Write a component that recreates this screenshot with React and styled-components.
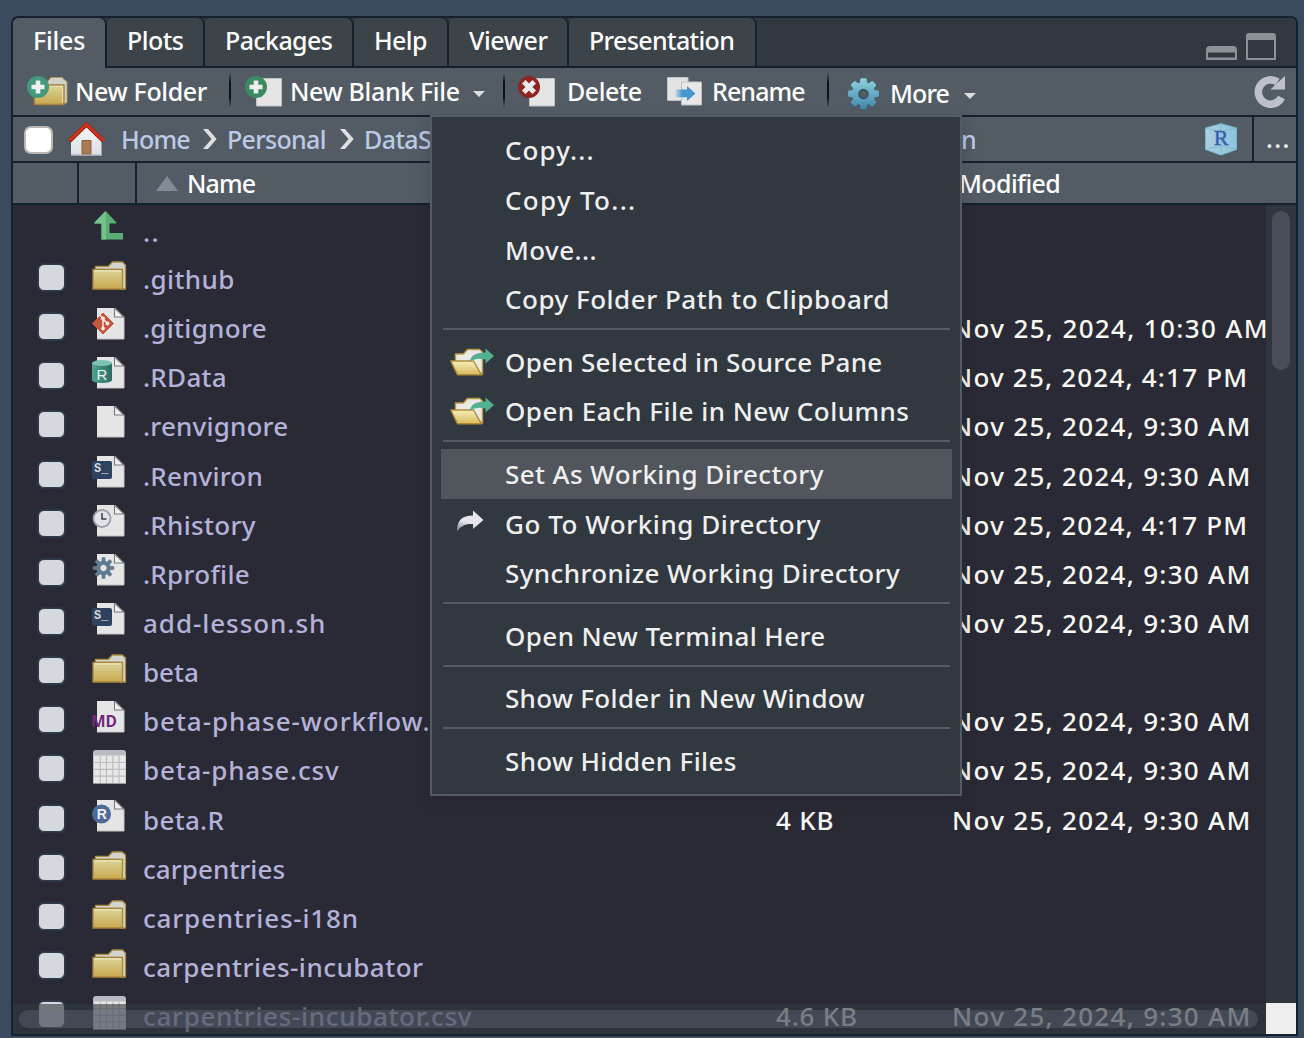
import React from "react";
import styled, { createGlobalStyle, css } from "styled-components";

const line = "#15212f";
const bar = "#535c65";
const dark = "#31383f";

const GlobalStyle = createGlobalStyle`
  * { box-sizing: border-box; }
  html, body { margin: 0; height: 100%; overflow: hidden; }
  body {
    background: #3a4b60;
    font-family: "Noto Sans", "Open Sans", sans-serif;
    font-size: 26px;
    font-weight: 500;
    color: #fff;
  }
  svg { display: block; flex: none; }
`;

const Desktop = styled.div`
  height: 1038px;
  padding: 16px 5px 2px 11px;
`;

const Pane = styled.section`
  position: relative;
  width: 1287px;
  height: 1020px;
  border: 2px solid ${line};
  border-radius: 7px 7px 0 0;
  display: flex;
  flex-direction: column;
  background: ${dark};
`;

const TabStrip = styled.div`
  display: flex;
  height: 50px;
  flex: none;
  font-size: 25px;
  background: linear-gradient(${line}, ${line}) 0 100% / 100% 2px no-repeat, ${dark};
  border-radius: 5px 5px 0 0;
`;

const Tab = styled.div`
  width: ${(p) => p.$w}px;
  height: ${(p) => (p.$active ? 50 : 48)}px;
  padding: 4px 0 0 20px;
  line-height: 36px;
  background: ${(p) => (p.$active ? bar : "#3c4349")};
  border-radius: 6px 6px 0 0;
  box-shadow: 2px 0 0 ${line};
  margin-right: 2px;
`;

const WindowButtons = styled.div`
  margin-left: auto;
  display: flex;
  gap: 9px;
  align-items: flex-end;
  padding: 0 20px 8px 0;
`;

const Toolbar = styled.div`
  display: flex;
  align-items: center;
  height: 49px;
  flex: none;
  padding: 0 10px 0 14px;
  font-size: 25px;
  background: ${bar};
  border-bottom: 2px solid ${line};
`;

const Label = styled.span`
  white-space: pre;
  line-height: 36px;
  letter-spacing: ${(p) => p.$ls || 0}px;
  ${(p) => p.$w && css`flex: 0 0 ${p.$w}px; width: ${p.$w}px;`}
`;

const ToolLabel = styled(Label)`
  padding-bottom: 2px;
`;

const ToolButton = styled.div`
  display: flex;
  align-items: center;
  width: ${(p) => p.$w}px;
  flex: none;
  padding-top: ${(p) => p.$drop || 0}px;
`;

const IconSlot = styled.span`
  display: flex;
  flex: 0 0 ${(p) => p.$w}px;
`;

const Divider = styled.div`
  width: 2px;
  height: 36px;
  flex: none;
  margin-right: ${(p) => p.$after}px;
  margin-bottom: 4px;
  background: linear-gradient(#0000, #0b1118 30%, #0b1118 70%, #0000);
`;

const Caret = styled.span`
  margin-top: 5px;
  border: 6px solid transparent;
  border-top-color: #dcdee0;
  border-bottom: 0;
`;

const PathBar = styled.div`
  display: flex;
  align-items: center;
  height: 46px;
  flex: none;
  padding-left: 11px;
  font-size: 25px;
  color: #bccae6;
  background: ${bar};
  border-bottom: 2px solid ${line};
`;

const SelectAll = styled.span`
  width: 29px;
  height: 28px;
  flex: none;
  background: #fff;
  border: 2px solid #b9b6b3;
  border-radius: 7px;
  margin: 2px 15px 0 0;
`;

const HomeSlot = styled.span`
  flex: 0 0 53px;
`;

const PathEnd = styled.div`
  display: flex;
  margin-left: auto;
  align-items: center;
  height: 44px;
`;

const Browse = styled.div`
  width: 44px;
  height: 44px;
  margin-left: 14px;
  padding: 3px 0 0 12px;
  line-height: 36px;
  letter-spacing: 1.4px;
  color: #fff;
  border-left: 2px solid ${line};
`;

const HeaderRow = styled.div`
  display: grid;
  grid-template-columns: 66px 58px 822px 1fr;
  height: 42px;
  flex: none;
  font-size: 25px;
  background: ${bar};
  border-bottom: 2px solid ${line};
`;

const HeaderCell = styled.div`
  display: flex;
  align-items: center;
  gap: 9px;
  padding-left: ${(p) => p.$pad || 0}px;
  border-right: ${(p) => (p.$rule ? 2 : 0)}px solid ${line};
`;

const Body = styled.div`
  flex: 1;
  min-height: 0;
  display: grid;
  grid-template-columns: 1fr 30px;
`;

const FileList = styled.div`
  position: relative;
  overflow: hidden;
  background: #292a35;
`;

const FileRow = styled.div`
  display: grid;
  grid-template-columns: 25px 79px 633px 176px 1fr;
  padding-left: 26px;
  height: ${(p) => (p.$first ? 48 : 49.15)}px;
  color: #f8f8f2;
`;

const CheckCell = styled.div`
  padding-top: 11px;
`;

const Check = styled.span`
  display: block;
  width: 27px;
  height: 27px;
  margin-left: -1px;
  background: #d5d9dd;
  border: 1px solid #2d3c4b;
  border-radius: 6px;
  box-shadow: 0 0 0 1px #2b3543;
`;

const IconCell = styled.div`
  padding: ${(p) => (p.$first ? 3 : 6)}px 0 0 28px;
`;

const FileText = styled(Label)`
  padding-top: ${(p) => (p.$first ? 8 : 7)}px;
  line-height: 38px;
  color: ${(p) => (p.$name ? "#b5b1d8" : "inherit")};
`;

const BottomScroll = styled.div`
  position: absolute;
  left: 0;
  right: 0;
  bottom: 0;
  height: 30px;
  padding: 6px 8px 6px 6px;
  background: rgba(49, 57, 62, 0.62);
`;

const SideScroll = styled.div`
  display: flex;
  flex-direction: column;
  align-items: center;
  padding-top: 6px;
  background: #2f363d;
`;

const Thumb = styled.div`
  border-radius: 9px;
  width: ${(p) => (p.$side ? "18px" : "100%")};
  height: ${(p) => (p.$side ? 159 : 18)}px;
  background: ${(p) => (p.$side ? "#484d59" : "rgba(112, 118, 140, 0.32)")};
`;

const Corner = styled.div`
  width: 30px;
  height: 31px;
  margin-top: auto;
  background: #eee;
`;

const Menu = styled.div`
  position: absolute;
  left: 417px;
  top: 97px;
  width: 532px;
  height: 681px;
  padding: 8.6px 8px 0 9px;
  background: ${dark};
  border: 2px solid ${bar};
  color: #efefef;
  box-shadow: 0 5px 14px rgba(40, 34, 44, 0.3);
`;

const MenuItem = styled.div`
  display: flex;
  align-items: center;
  height: 49.6px;
  background: ${(p) => (p.$hot ? "#50565b" : "none")};
`;

const MenuIcon = styled.span`
  flex: 0 0 64px;
  padding-left: 9px;
`;

const MenuRule = styled.div`
  height: 2px;
  margin: 4px 2px 7px;
  background: ${bar};
`;

/* ---------- icons ---------- */

const gearPath = (cx, cy, inner, outer, teeth, half) => {
  const pts = [];
  for (let i = 0; i < teeth; i++) {
    const a = (i / teeth) * Math.PI * 2;
    [[inner, -half * 1.7], [outer, -half], [outer, half], [inner, half * 1.7]].forEach(([r, d]) => {
      pts.push(`${(cx + r * Math.sin(a + d)).toFixed(2)} ${(cy - r * Math.cos(a + d)).toFixed(2)}`);
    });
  }
  return `M${pts.join("L")}Z`;
};

const FolderGradient = ({ id }) => (
  <linearGradient id={id} x1="0" y1="0" x2="0" y2="1">
    <stop offset="0" stopColor="#dcd59c" />
    <stop offset="1" stopColor="#c9a84e" />
  </linearGradient>
);

const PlusBadge = ({ color }) => (
  <>
    <circle cx="11" cy="11" r="11" fill={color} />
    <path d="M8.700 4.500h4.600v4.200h4.200v4.600h-4.200v4.200H8.700v-4.200H4.500V8.700h4.200z" fill="#edf0ee" />
  </>
);

const NewFolderIcon = () => (
  <svg width="41" height="31" viewBox="0 0 41 31">
    <defs><FolderGradient id="nf" /></defs>
    <path d="M20 6l4-4.500h11L40 6v20.500L37 28H20z" fill="#d2d1cc" stroke="#b0975a" />
    <path d="M7.500 9H37v19.500H7.500z" fill="url(#nf)" stroke="#a5813a" strokeWidth="1.400" />
    <path d="M20 10.300h15.600V27" stroke="#e9e4b8" strokeWidth="1" fill="none" />
    <PlusBadge color="#45987b" />
  </svg>
);

const NewFileIcon = () => (
  <svg width="38" height="31" viewBox="0 0 38 31">
    <path d="M11.500 2.500h25v27.500h-25z" fill="#e5e5e5" stroke="#bfc2c4" />
    <PlusBadge color="#3b8a62" />
  </svg>
);

const DeleteIcon = () => (
  <svg width="38" height="31" viewBox="0 0 38 31">
    <path d="M11.500 2.500h25v27.500h-25z" fill="#e5e5e5" stroke="#bfc2c4" />
    <circle cx="11" cy="11" r="11" fill="#8d2521" />
    <path d="M5.800 5.800L16.200 16.200M16.200 5.800L5.800 16.200" stroke="#ececec" strokeWidth="5" />
  </svg>
);

const RenameIcon = () => (
  <svg width="36" height="29" viewBox="0 0 36 29">
    <defs>
      <linearGradient id="rn"><stop offset="0" stopColor="#4c98d0" stopOpacity="0.2" /><stop offset="0.350" stopColor="#4596cf" /></linearGradient>
    </defs>
    <path d="M.5.500h20.500v23H.500z" fill="#e3e3e3" stroke="#bfc2c4" />
    <path d="M14.500 5h20v23h-20z" fill="#e8e8e8" stroke="#bfc2c4" />
    <path d="M8.500 12.500H20V9l8.500 7.500L20 24v-3.700H8.500z" fill="url(#rn)" />
  </svg>
);

const MoreGear = () => (
  <svg width="34" height="34" viewBox="0 0 34 34">
    <defs>
      <linearGradient id="mg" x1="0" y1="0" x2="0" y2="1"><stop offset="0" stopColor="#8bcfdd" /><stop offset="1" stopColor="#4489ad" /></linearGradient>
    </defs>
    <path d={gearPath(16.5, 17, 10.8, 15, 8, 0.15)} fill="#2e4450" stroke="#3d5b6b" strokeWidth="3.400" strokeLinejoin="round" opacity=".6" />
    <path d={gearPath(16.5, 16.7, 10.8, 14.6, 8, 0.15)} fill="url(#mg)" stroke="url(#mg)" strokeWidth="2" strokeLinejoin="round" />
    <circle cx="16.500" cy="17" r="4.300" fill={bar} stroke="#3a5361" strokeWidth="2" />
  </svg>
);

const RefreshIcon = () => (
  <svg width="32" height="33" viewBox="0 0 32 33">
    <path d="M27.500 22.500A12.200 12.200 0 1 1 23.500 7" fill="none" stroke="#bfc1c9" strokeWidth="7.600" />
    <path d="M31 1v13.500H16.500l5-5z" fill="#bfc1c9" />
  </svg>
);

const MinimizeIcon = () => (
  <svg width="31" height="14" viewBox="0 0 31 14">
    <path fillRule="evenodd" d="M4 0h23q4 0 4 4v10H0V4q0-4 4-4zM2 6.500v5h27v-5z" fill="#8b9296" />
  </svg>
);

const MaximizeIcon = () => (
  <svg width="30" height="27" viewBox="0 0 30 27">
    <path fillRule="evenodd" d="M3 0h24q3 0 3 3v24H0V3q0-3 3-3zM2 7v18h26V7z" fill="#8b9296" />
  </svg>
);

const HomeIcon = () => (
  <svg width="37" height="34" viewBox="0 0 37 34">
    <defs>
      <linearGradient id="hm" x1="0" y1="0" x2="0" y2="1"><stop offset="0" stopColor="#f6f6f7" /><stop offset="1" stopColor="#dddfe5" /></linearGradient>
    </defs>
    <path d="M18.500 4L33.500 18v15H3V18z" fill="url(#hm)" />
    <path d="M3 33h31" stroke="#b8bcc2" strokeWidth="1.500" />
    <path d="M14 18.500h9V32h-9z" fill="#a97c52" stroke="#8b623e" />
    <path d="M1.500 19L18.500 2.500 35.500 19" fill="none" stroke="#8c2216" strokeWidth="4.200" />
    <path d="M1.500 18.500L18.500 2.200 35.500 18.500" fill="none" stroke="#d5321e" strokeWidth="2.600" />
  </svg>
);

const Chevron = () => (
  <svg width="15" height="22" viewBox="0 0 15 22">
    <path d="M0 1h5l8.700 10L5 21H0l8.500-10z" fill="#dfdfe0" />
  </svg>
);

const ProjectCube = () => (
  <svg width="34" height="33" viewBox="0 0 34 33">
    <defs><linearGradient id="pc"><stop offset="0" stopColor="#abcfdf" /><stop offset="1" stopColor="#8fc2df" /></linearGradient></defs>
    <path d="M17 .7L32.500 5v21.500L17 32 1.500 26.500V5z" fill="url(#pc)" stroke="#78b9cf" />
    <path d="M1.500 5L17 8.500 32.500 5M17 .7V32M1.500 26.500L17 22.500l15.500 4" fill="none" stroke="#74bccb" strokeWidth="1" opacity=".8" />
    <text x="17" y="21.500" textAnchor="middle" fontFamily="Liberation Serif, serif" fontSize="22" fill="#3b5fae" stroke="#3b5fae" strokeWidth=".5">R</text>
  </svg>
);

const UpIcon = () => (
  <svg width="36" height="34" viewBox="0 0 36 34">
    <path d="M13.500 3l11 11.500v1H17.500V25H31v6.500H9.500v-16H2.500v-1z" fill="#5aae74" />
    <path d="M13.500 3L2.500 14.500v1h7v16H14V12z" fill="#76c08a" />
  </svg>
);

const FolderIcon = () => (
  <svg width="36" height="34" viewBox="0 0 36 34">
    <defs><FolderGradient id="fo" /></defs>
    <path d="M3.500 10.500V7.300h13L20.500 3h9.800L33.500 6v24h-5V10.500z" fill="#d4d4cf" stroke="#a98c3e" strokeWidth="1.300" strokeLinejoin="round" />
    <path d="M1 10.500h29.500V30H1z" fill="url(#fo)" stroke="#a8843a" strokeWidth="1.300" />
    <path d="M2.500 11.900h26.800" stroke="#eee9bd" strokeWidth="1.300" />
  </svg>
);

const Page = ({ children }) => (
  <svg width="36" height="35" viewBox="0 0 36 35">
    <path d="M5 0h18.500L32 9v22H5z" fill="#e5e5e5" />
    <path d="M5 31h27V9.500" stroke="#c4c4c4" fill="none" />
    <path d="M22.500 0v9H32z" fill="#f1f1f1" stroke="#77797b" strokeWidth="1.100" />
    {children}
  </svg>
);

const GitIcon = () => (
  <Page>
    <path d="M11 5L21.500 15.500 11 26 .5 15.500z" fill="#c5553b" stroke="#c5553b" strokeLinejoin="round" />
    <path d="M8 7.500l3 3v10.500M11 11l4.500 4.500" stroke="#f1e6e2" strokeWidth="1.600" fill="none" />
    <circle cx="11" cy="10.500" r="1.900" fill="#f4ece9" /><circle cx="11" cy="20.500" r="1.900" fill="#f4ece9" /><circle cx="15.500" cy="15.500" r="1.900" fill="#f4ece9" />
  </Page>
);

const DataIcon = () => (
  <Page>
    <defs><linearGradient id="cy"><stop offset="0" stopColor="#4fa58d" /><stop offset="1" stopColor="#2c6c61" /></linearGradient></defs>
    <path d="M0 6v17c0 4 20 4 20 0V6z" fill="url(#cy)" />
    <ellipse cx="10" cy="6" rx="10" ry="3" fill="#7cc3b0" />
    <text x="10" y="22.500" textAnchor="middle" fontFamily="Liberation Sans, sans-serif" fontSize="15" fill="#edf4f2">R</text>
  </Page>
);

const ShellIcon = () => (
  <Page>
    <rect x="0" y="5" width="20" height="18" rx="2" fill="#2d4360" />
    <text x="2" y="16" fontFamily="Liberation Mono, monospace" fontWeight="700" fontSize="12" fill="#d5dae0">S_</text>
  </Page>
);

const ClockIcon = () => (
  <Page>
    <circle cx="10" cy="13.500" r="8.500" fill="#e3e5e9" stroke="#9a9fab" strokeWidth="1.800" />
    <path d="M10 8v6h4.500" stroke="#3d4047" strokeWidth="1.500" fill="none" />
  </Page>
);

const ProfileIcon = () => (
  <Page>
    <path fillRule="evenodd" d={`${gearPath(11.5, 14, 7.2, 10.8, 8, 0.16)}M11.500 10.800a3.200 3.200 0 1 0 .01 0z`} fill="#5f7b93" />
  </Page>
);

const MarkdownIcon = () => (
  <Page>
    <text x="-1" y="25.500" fontFamily="Open Sans, sans-serif" fontWeight="700" fontSize="16" textLength="26" lengthAdjust="spacingAndGlyphs" fill="#76267e">MD</text>
  </Page>
);

const RScriptIcon = () => (
  <Page>
    <circle cx="9.500" cy="14" r="9.500" fill="#4d6a99" />
    <text x="9.800" y="19.200" textAnchor="middle" fontFamily="Liberation Sans, sans-serif" fontWeight="700" fontSize="14" fill="#eef1f5">R</text>
  </Page>
);

const TableIcon = () => (
  <svg width="36" height="35" viewBox="0 0 36 35">
    <path d="M4 0h27q3 0 3 3v31H1V3q0-3 3-3z" fill="#b9bbc3" />
    <path d="M2 5.500h31.500V33H2z" fill="#e7e7e7" />
    <path d="M8.300 5.500V33M14.500 5.500V33M20.800 5.500V33M27 5.500V33M2 12.500h31.500M2 19.300h31.500M2 26.200h31.500" stroke="#bcbdc0" strokeWidth="1.200" />
    <path d="M1 33.500h33" stroke="#96989c" />
  </svg>
);

const OpenFolderIcon = () => (
  <svg width="45" height="28" viewBox="0 0 45 28">
    <defs><linearGradient id="of" x1="0" y1="0" x2="0" y2="1"><stop offset="0" stopColor="#f5f0bd" /><stop offset="1" stopColor="#d9b95b" /></linearGradient></defs>
    <path d="M5.500 13V6h8l4-4.500h12L32.500 4v22z" fill="#e9e9e6" stroke="#b99b45" strokeWidth="1.400" />
    <path d="M.8 13h22.700L31.500 26.800H7.500z" fill="url(#of)" stroke="#b08c38" strokeWidth="1.400" strokeLinejoin="round" />
    <path d="M20 13.500c1-7 7-9 15.500-9V.500L44 8l-8.500 7.500v-4C29 10 25 10.500 20 13.500z" fill="#52b190" />
  </svg>
);

const GoIcon = () => (
  <svg width="45" height="30" viewBox="0 0 45 30">
    <defs><linearGradient id="go" x1="0" y1="1" x2=".4" y2="0"><stop offset="0" stopColor="#e4e6eb" stopOpacity=".35" /><stop offset=".5" stopColor="#e4e6eb" /></linearGradient></defs>
    <path d="M7 22.500C7 11 12 6.500 23 6.500V1.500l10.500 9.500L23 20v-5C15 14.500 11 17 7 22.500z" fill="url(#go)" />
  </svg>
);

const SortArrow = () => (
  <svg width="22" height="15" viewBox="0 0 22 15"><path d="M11 0l11 15H0z" fill="#838b98" /></svg>
);

/* ---------- data ---------- */

const tabs = [
  { name: "Files", w: 92, ls: -0.2 },
  { name: "Plots", w: 96, ls: -0.5 },
  { name: "Packages", w: 147, ls: -0.6 },
  { name: "Help", w: 93, ls: -0.6 },
  { name: "Viewer", w: 118, ls: -0.4 },
  { name: "Presentation", w: 186, ls: -0.65 },
];

const am = { text: "Nov 25, 2024, 9:30 AM", ls: 1.3 };
const pm = { text: "Nov 25, 2024, 4:17 PM", ls: 1.2 };
const late = { text: "Nov 25, 2024, 10:30 AM", ls: 1.35 };

const files = [
  { name: "..", Icon: UpIcon, first: true, ls: 1.4 },
  { name: ".github", Icon: FolderIcon, ls: 0.4 },
  { name: ".gitignore", Icon: GitIcon, date: late },
  { name: ".RData", Icon: DataIcon, date: pm },
  { name: ".renvignore", Icon: Page, date: am, ls: 0.2 },
  { name: ".Renviron", Icon: ShellIcon, date: am, ls: 0.2 },
  { name: ".Rhistory", Icon: ClockIcon, date: pm },
  { name: ".Rprofile", Icon: ProfileIcon, date: am },
  { name: "add-lesson.sh", Icon: ShellIcon, date: am, ls: 0.95 },
  { name: "beta", Icon: FolderIcon, ls: 0 },
  { name: "beta-phase-workflow.md", Icon: MarkdownIcon, date: am, ls: 0.95 },
  { name: "beta-phase.csv", Icon: TableIcon, date: am, ls: 0.8 },
  { name: "beta.R", Icon: RScriptIcon, size: "4 KB", date: am },
  { name: "carpentries", Icon: FolderIcon, ls: 0.05 },
  { name: "carpentries-i18n", Icon: FolderIcon, ls: 0.8 },
  { name: "carpentries-incubator", Icon: FolderIcon, ls: 0.5 },
  { name: "carpentries-incubator.csv", Icon: TableIcon, size: "4.6 KB", date: am, ls: 0.68 },
];

const menu = [
  [
    { text: "Copy...", ls: 1.1 },
    { text: "Copy To...", ls: 1.3 },
    { text: "Move...", ls: 0.4 },
    { text: "Copy Folder Path to Clipboard", ls: 0.5 },
  ],
  [
    { text: "Open Selected in Source Pane", Icon: OpenFolderIcon, ls: 0.28 },
    { text: "Open Each File in New Columns", Icon: OpenFolderIcon, ls: 0.47 },
  ],
  [
    { text: "Set As Working Directory", hot: true, ls: 0.42 },
    { text: "Go To Working Directory", Icon: GoIcon, ls: 0.55 },
    { text: "Synchronize Working Directory", ls: 0.4 },
  ],
  [{ text: "Open New Terminal Here", ls: 0.4 }],
  [{ text: "Show Folder in New Window", ls: 0.32 }],
  [{ text: "Show Hidden Files", ls: 0.35 }],
];

export default function App() {
  return (
    <Desktop>
      <GlobalStyle />
      <Pane>
        <TabStrip>
          {tabs.map((t, i) => (
            <Tab key={t.name} $w={t.w} $active={i === 0}><Label $ls={t.ls}>{t.name}</Label></Tab>
          ))}
          <WindowButtons><MinimizeIcon /><MaximizeIcon /></WindowButtons>
        </TabStrip>
        <Toolbar>
          <ToolButton $w={202}><IconSlot $w={48}><NewFolderIcon /></IconSlot><ToolLabel $ls={-0.35}>New Folder</ToolLabel></ToolButton>
          <Divider $after={14} />
          <ToolButton $w={258}><IconSlot $w={45}><NewFileIcon /></IconSlot><ToolLabel $w={183} $ls={-0.35}>New Blank File</ToolLabel><Caret /></ToolButton>
          <Divider $after={13} />
          <ToolButton $w={149}><IconSlot $w={49}><DeleteIcon /></IconSlot><ToolLabel $ls={-0.5}>Delete</ToolLabel></ToolButton>
          <ToolButton $w={160}><IconSlot $w={45}><RenameIcon /></IconSlot><ToolLabel $ls={-0.9}>Rename</ToolLabel></ToolButton>
          <Divider $after={18} />
          <ToolButton $w={150} $drop={4}><IconSlot $w={43}><MoreGear /></IconSlot><ToolLabel $w={74} $ls={-0.9}>More</ToolLabel><Caret /></ToolButton>
          <PathEnd><RefreshIcon /></PathEnd>
        </Toolbar>
        <PathBar>
          <SelectAll />
          <HomeSlot><HomeIcon /></HomeSlot>
          <Label $w={82} $ls={-0.8}>Home</Label>
          <IconSlot $w={24}><Chevron /></IconSlot>
          <Label $w={113} $ls={-0.7}>Personal</Label>
          <IconSlot $w={24}><Chevron /></IconSlot>
          <Label $w={597} $ls={-0.6}>DataScience</Label>
          <Label>n</Label>
          <PathEnd><ProjectCube /><Browse>...</Browse></PathEnd>
        </PathBar>
        <HeaderRow>
          <HeaderCell $rule />
          <HeaderCell $rule />
          <HeaderCell $pad={19}><SortArrow /><Label $ls={-0.9}>Name</Label></HeaderCell>
          <HeaderCell><Label $ls={-0.6}>Modified</Label></HeaderCell>
        </HeaderRow>
        <Body>
          <FileList>
            {files.map(({ name, Icon, size, date, first, ls = 0.3 }) => (
              <FileRow key={name} $first={first}>
                <CheckCell>{!first && <Check />}</CheckCell>
                <IconCell $first={first}><Icon /></IconCell>
                <FileText $name $first={first} $ls={ls}>{name}</FileText>
                <FileText $ls={0.8}>{size}</FileText>
                <FileText $ls={date && date.ls}>{date && date.text}</FileText>
              </FileRow>
            ))}
            <BottomScroll><Thumb /></BottomScroll>
          </FileList>
          <SideScroll><Thumb $side /><Corner /></SideScroll>
        </Body>
        <Menu>
          {menu.map((group, g) => (
            <React.Fragment key={g}>
              {g > 0 && <MenuRule />}
              {group.map(({ text, Icon, hot, ls }) => (
                <MenuItem key={text} $hot={hot}>
                  <MenuIcon>{Icon && <Icon />}</MenuIcon>
                  <Label $ls={ls}>{text}</Label>
                </MenuItem>
              ))}
            </React.Fragment>
          ))}
        </Menu>
      </Pane>
    </Desktop>
  );
}
